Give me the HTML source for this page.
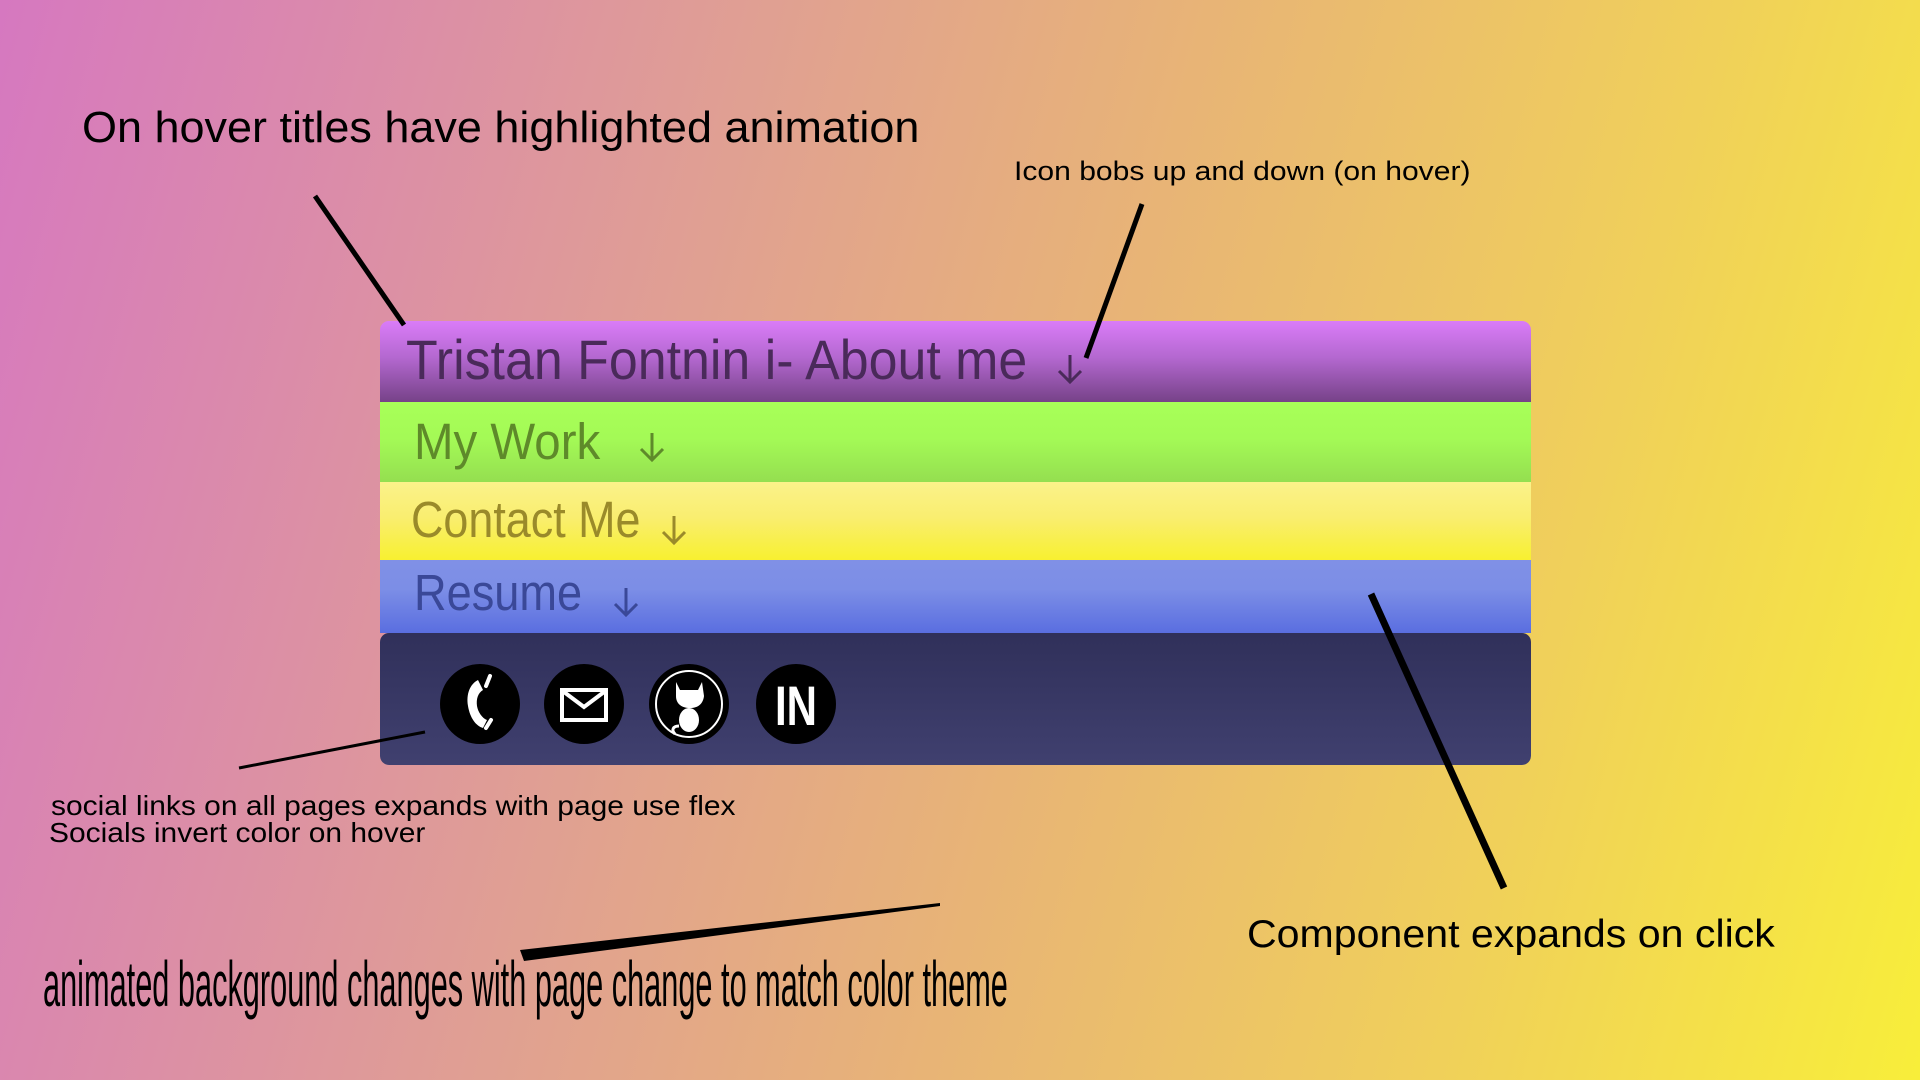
<!DOCTYPE html>
<html><head><meta charset="utf-8"><style>
*{margin:0;padding:0;box-sizing:border-box}
body{width:1920px;height:1080px;overflow:hidden;position:relative;font-family:"Liberation Sans",sans-serif;
background:linear-gradient(105deg,#d678c0 0%,#e0a092 35%,#e8b476 55%,#f0d05a 78%,#f8ee3a 100%);}
.t{position:absolute;white-space:nowrap;transform-origin:0 0;line-height:1}
.card{position:absolute;left:380px;top:321px;width:1151px;height:444px;border-radius:9px;overflow:hidden}
.b{position:absolute;left:0;width:100%}
.ar{position:absolute}
</style></head><body>
<div class="t" style="left:82px;top:106px;font-size:44px;transform:scaleX(1.022)">On hover titles have highlighted animation</div>
<div class="t" style="left:1014px;top:158px;font-size:27px;transform:scaleX(1.114)">Icon bobs up and down (on hover)</div>
<div class="t" style="left:1247px;top:915px;font-size:39px;transform:scaleX(1.054)">Component expands on click</div>
<div class="t" style="left:51px;top:792px;font-size:28px;transform:scaleX(1.07)">social links on all pages expands with page use flex</div>
<div class="t" style="left:49px;top:819px;font-size:28px;transform:scaleX(1.07)">Socials invert color on hover</div>
<div class="t" style="left:43px;top:952px;font-size:64px;transform:scaleX(0.48)">animated background changes with page change to match color theme</div>
<div class="card">
<div class="b" style="top:0;height:81px;background:linear-gradient(#da7cf8,#b468d0 45%,#764288)"></div>
<div class="b" style="top:81px;height:81px;background:linear-gradient(#a8ff58,#a4fa56 45%,#94de50)"></div>
<div class="b" style="top:161px;height:78px;background:linear-gradient(#fbf28a,#f9ee70 45%,#f8f030)"></div>
<div class="b" style="top:239px;height:73px;background:linear-gradient(#8090e6,#7c8ee6 40%,#5a6ee0)"></div>
<div class="b" style="top:312px;height:132px;border-radius:9px;background:linear-gradient(#30305a,#40406f)"></div>
</div>
<div class="t" style="left:406px;top:332px;font-size:56px;color:#4a2a5a;transform:scaleX(0.927)">Tristan Fontnin i- About me</div>
<div class="t" style="left:414px;top:416px;font-size:51px;color:#5e8a2a;transform:scaleX(0.93)">My Work</div>
<div class="t" style="left:411px;top:494px;font-size:51px;color:#9a8a2a;transform:scaleX(0.88)">Contact Me</div>
<div class="t" style="left:414px;top:567px;font-size:51px;color:#3a4898;transform:scaleX(0.885)">Resume</div>
<svg class="ar" style="left:1055px;top:353px" width="30" height="32"><path d="M15 2V29M4 18L15 29L26 18" stroke="#4a2a5a" stroke-width="3" fill="none"/></svg>
<svg class="ar" style="left:637px;top:431px" width="30" height="32"><path d="M15 2V29M4 18L15 29L26 18" stroke="#5e8a2a" stroke-width="3" fill="none"/></svg>
<svg class="ar" style="left:659px;top:514px" width="30" height="32"><path d="M15 2V29M4 18L15 29L26 18" stroke="#9a8a2a" stroke-width="3" fill="none"/></svg>
<svg class="ar" style="left:611px;top:586px" width="30" height="32"><path d="M15 2V29M4 18L15 29L26 18" stroke="#3a4898" stroke-width="3" fill="none"/></svg>
<svg width="1920" height="1080" style="position:absolute;left:0;top:0">
<line x1="315" y1="196" x2="404" y2="325" stroke="#000" stroke-width="5"/>
<line x1="1142" y1="204" x2="1086" y2="358" stroke="#000" stroke-width="5"/>
<line x1="1371" y1="594" x2="1504" y2="888" stroke="#000" stroke-width="7"/>
<line x1="239" y1="768" x2="425" y2="732" stroke="#000" stroke-width="3"/>
<polygon points="520,950 940,903 940,906 524,961" fill="#000"/>
<ellipse cx="480" cy="704" rx="40" ry="40" fill="#000"/>
<path d="M478 680c-8 4-12 14-10 26 2 12 8 20 15 22l4-8c-5-2-9-8-10-14-1-7 1-13 6-16z" fill="#fff"/>
<path d="M490 676l-4 10M491 720l-5 8" stroke="#fff" stroke-width="4" stroke-linecap="round"/>
<ellipse cx="584" cy="704" rx="40" ry="40" fill="#000"/>
<rect x="562" y="690" width="44" height="30" fill="none" stroke="#fff" stroke-width="4"/>
<path d="M564 692L584 707L604 692" stroke="#fff" stroke-width="4" fill="none"/>
<ellipse cx="689" cy="704" rx="40" ry="40" fill="#000"/>
<ellipse cx="689" cy="704" rx="33" ry="33" fill="none" stroke="#fff" stroke-width="2"/>
<path d="M676 682l4 8h18l4-8 2 14c-1 8-6 12-14 12s-14-4-14-12z" fill="#fff"/>
<ellipse cx="689" cy="720" rx="10" ry="12" fill="#fff"/>
<path d="M679 726c-6 0-8 4-4 8" stroke="#fff" stroke-width="3" fill="none"/>
<ellipse cx="796" cy="704" rx="40" ry="40" fill="#000"/>
<text x="796" y="725" text-anchor="middle" font-family="Liberation Sans" font-weight="bold" font-size="56" fill="#fff" transform="translate(796 0) scale(0.75 1) translate(-796 0)">IN</text>
</svg>
</body></html>
